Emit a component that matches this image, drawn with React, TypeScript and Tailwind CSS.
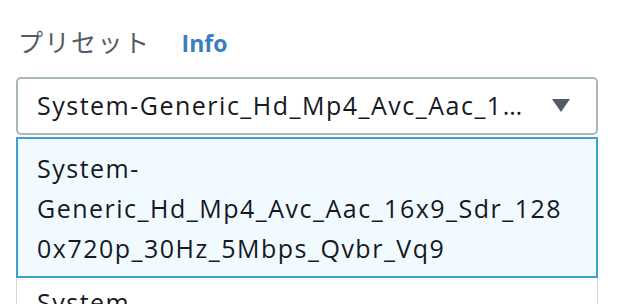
import React from 'react';

const FONT = { fontFamily: '"Open Sans", "Noto Sans CJK JP", sans-serif' };

const App: React.FC = () => {
  const selected = 'System-Generic_Hd_Mp4_Avc_Aac_16x9_Sdr_1280x720p_30Hz_5Mbps_Qvbr_Vq9';

  return (
    <div className="w-[622px] h-[304px] overflow-hidden bg-white pl-[16px] pr-[24px] pt-[23px]" style={FONT}>
      {/* Label */}
      <div className="flex items-center h-[40px] pl-[2px]">
        <span className="text-[25px] text-[#545b64] tracking-[1.5px]">プリセット</span>
        <a className="ml-[31px] text-[23px] font-bold text-[#3a7ebf]">Info</a>
      </div>

      {/* Select trigger */}
      <div className="mt-[14px] flex items-center h-[58px] border-2 border-[#aab7b8] rounded-[5px] pl-[19px] pr-[26px]">
        <span className="flex-1 truncate text-[25px] tracking-[1.5px] text-[#16191f]">{selected}</span>
        <svg width="18" height="14" viewBox="0 0 18 14" className="ml-[18px] shrink-0">
          <polygon points="0,0 18,0 9,13" fill="#545b64" />
        </svg>
      </div>

      {/* Dropdown list */}
      <div className="mt-[2px] border-x border-[#d5dbdb]">
        <div className="-mx-px border-2 border-[#3f9fcf] bg-[#f1faff] pl-[19px] pr-[20px] pt-[9px] pb-[8px]">
          <p className="text-[25px] leading-[40px] tracking-[1.5px] text-[#16191f] break-words">{selected}</p>
        </div>
        <div className="pl-[20px] pr-[20px] pt-[4px]">
          <p className="text-[25px] leading-[40px] tracking-[1.5px] text-[#16191f]">
            System-Generic_Hd_Mp4_Avc_Aac_16x9_Sdr_1920x1080p_30Hz_8Mbps_Qvbr_Vq9
          </p>
        </div>
      </div>
    </div>
  );
};

export default App;
